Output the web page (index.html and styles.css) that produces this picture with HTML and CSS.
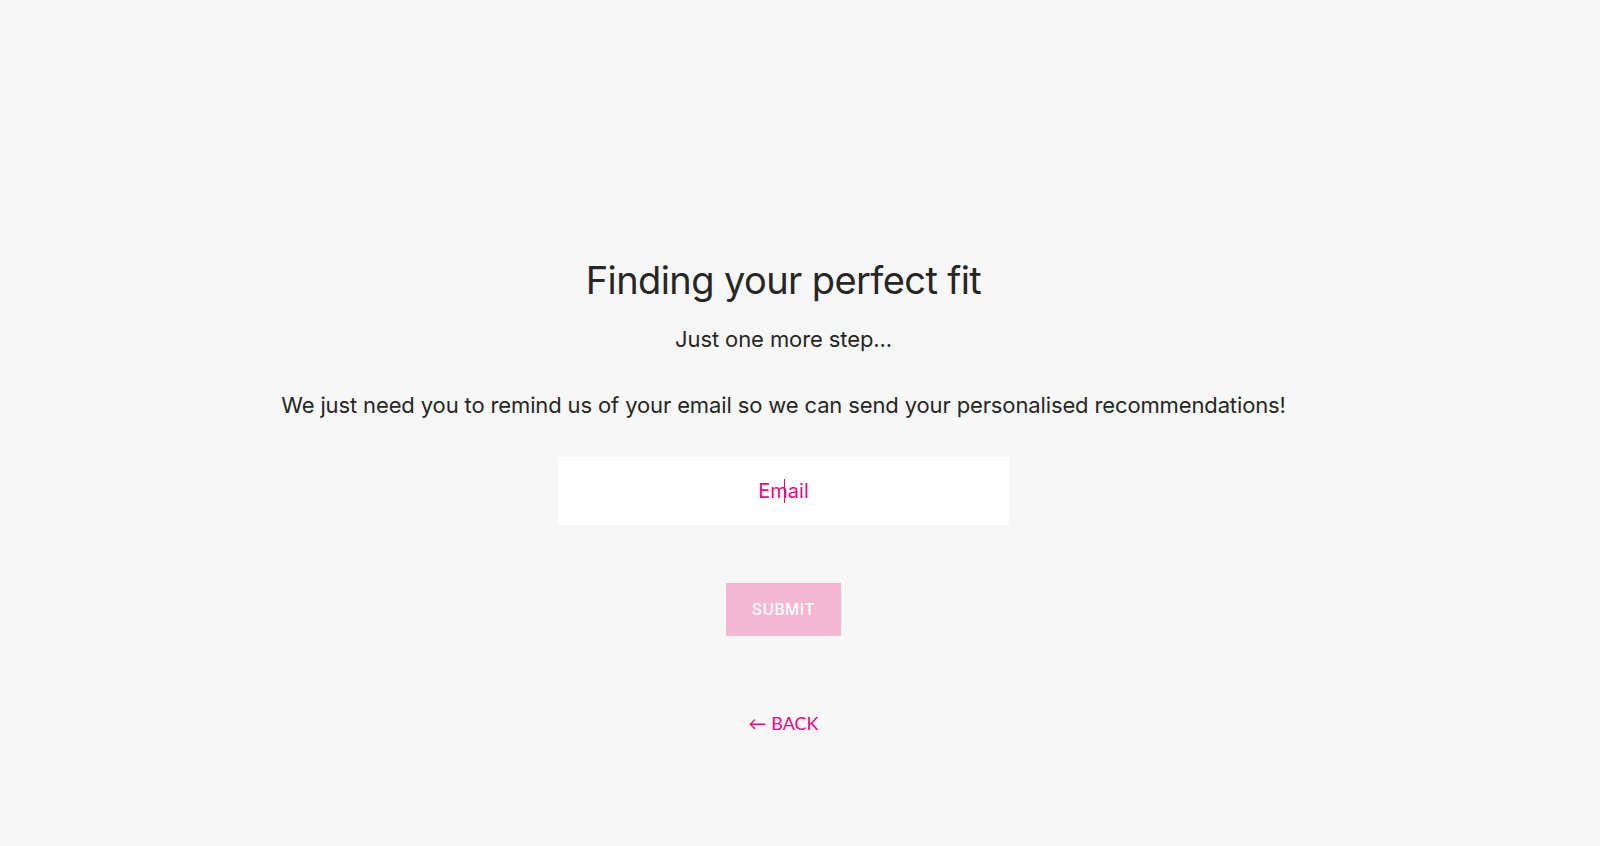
FILE: index.html
```html
<!DOCTYPE html>
<html lang="en">
<head>
<meta charset="utf-8">
<title>Finding your perfect fit</title>
<link rel="stylesheet" href="styles.css">
</head>
<body>
<main class="page">
  <h1 class="title">Finding your perfect fit</h1>
  <p class="subtitle">Just one more step...</p>
  <p class="lead">We just need you to remind us of your email so we can send your personalised recommendations!</p>
  <form class="form">
    <div class="field">
      <input class="email" type="email" placeholder="Email">
      <span class="caret"></span>
    </div>
    <button class="submit" type="button">SUBMIT</button>
  </form>
  <a class="back" href="#">&larr; BACK</a>
</main>
</body>
</html>
```
FILE: styles.css
```css
html, body {
  margin: 0;
  padding: 0;
  background: #f7f7f7;
}
body {
  font-family: Inter, "Noto Sans", sans-serif;
  color: #262626;
  height: 846px;
}
.page {
  display: flex;
  flex-direction: column;
  align-items: center;
  padding-top: 256px;
  padding-right: 33px;
}
.title {
  margin: 0;
  font-size: 38px;
  font-weight: 400;
  line-height: 48px;
  letter-spacing: -0.6px;
}
.subtitle {
  margin: 21px 0 0;
  font-size: 22px;
  line-height: 28px;
  letter-spacing: -0.1px;
}
.lead {
  margin: 38px 0 0;
  font-size: 22px;
  line-height: 28px;
  letter-spacing: -0.13px;
}
.form {
  display: flex;
  flex-direction: column;
  align-items: center;
  margin-top: 38px;
}
.field {
  position: relative;
  width: 451px;
  height: 68px;
}
.email {
  box-sizing: border-box;
  width: 100%;
  height: 100%;
  border: none;
  outline: none;
  background: #fff;
  text-align: center;
  font-family: Inter, "Noto Sans", sans-serif;
  font-size: 20px;
  color: #e8097f;
}
.email::placeholder {
  color: #e8097f;
  opacity: 1;
}
.caret {
  position: absolute;
  left: 226px;
  top: 22px;
  width: 1px;
  height: 24px;
  background: #e8097f;
}
.submit {
  margin-top: 58px;
  width: 115px;
  height: 53px;
  border: none;
  background: #f4b8d3;
  color: #fff;
  font-family: Inter, "Noto Sans", sans-serif;
  font-size: 15.5px;
  font-weight: 500;
  letter-spacing: 0.5px;
  padding: 0;
}
.back {
  margin-top: 75px;
  font-family: Lato, "Noto Sans", sans-serif;
  font-size: 18px;
  line-height: 24px;
  color: #e8097f;
  text-decoration: none;
}
```
